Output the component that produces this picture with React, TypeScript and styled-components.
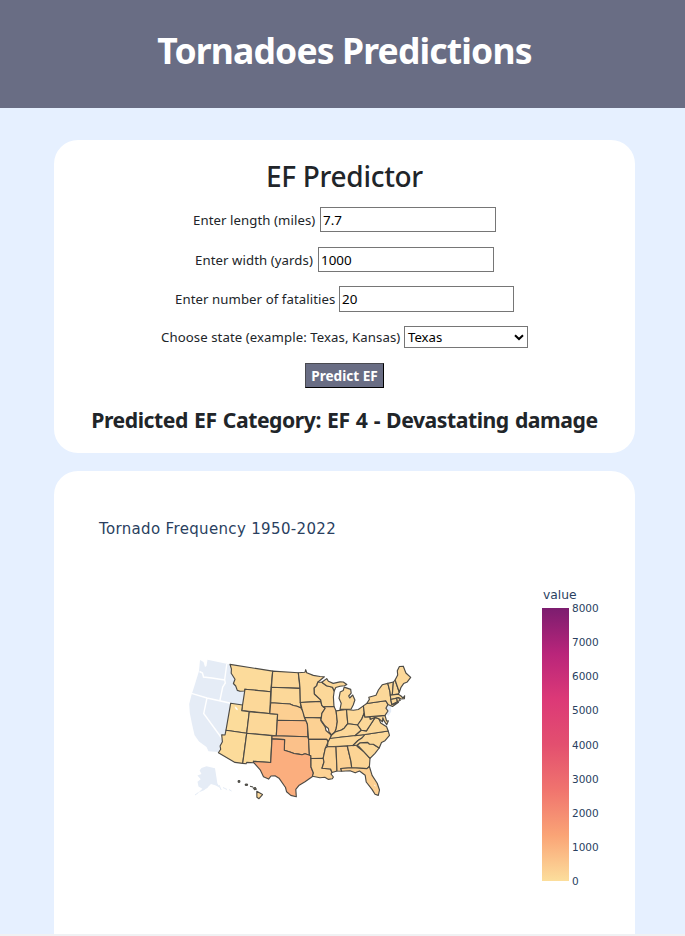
import React from "react";
import styled, { createGlobalStyle } from "styled-components";

const GlobalStyle = createGlobalStyle`
  *, *::before, *::after { box-sizing: border-box; }
  html, body { margin: 0; padding: 0; }
  body {
    background: #e6f0ff;
    color: #212529;
    font-family: "Noto Sans", "Open Sans", sans-serif;
    overflow: hidden;
  }
`;

const Page = styled.div`
  height: 936px;
  display: flex;
  flex-direction: column;
  overflow: hidden;
`;

const Header = styled.header`
  flex: none;
  height: 108px;
  padding: 26px 0 0 4px;
  background: #696d84;
  text-align: center;
`;

const Title = styled.h1`
  margin: 0;
  color: #fff;
  font-size: 35.5px;
  line-height: 48px;
  font-weight: 700;
  letter-spacing: -0.85px;
  white-space: nowrap;
`;

const Main = styled.main`
  flex: 1;
  min-height: 0;
  display: flex;
  flex-direction: column;
  gap: 18px;
  padding: 32px 50px 0 54px;
`;

const PredictorCard = styled.section`
  flex: none;
  height: 313px;
  padding-top: 17px;
  border-radius: 24px;
  background: #fff;
  display: flex;
  flex-direction: column;
  align-items: center;
`;

const CardTitle = styled.h2`
  margin: 0 0 12px;
  font-size: 28px;
  line-height: 38px;
  font-weight: 500;
  letter-spacing: -0.3px;
`;

const Field = styled.div<{ $height: number; $after: number }>`
  display: flex;
  align-items: center;
  gap: 4px;
  height: ${(p) => p.$height}px;
  margin-bottom: ${(p) => p.$after}px;
`;

const Label = styled.label<{ $width: number }>`
  width: ${(p) => p.$width}px;
  font-size: 13.2px;
  line-height: 20px;
  letter-spacing: 0.08px;
  white-space: nowrap;
`;

const TextInput = styled.input<{ $width: number }>`
  width: ${(p) => p.$width}px;
  height: 100%;
  padding: 1px 2px;
  border: 1px solid #767676;
  border-radius: 0;
  background: #fff;
  color: #000;
  font: 13.4px "Noto Sans", sans-serif;
  outline: none;
`;

const SelectBox = styled.div`
  width: 124px;
  height: 22px;
  padding: 0 3px;
  border: 1px solid #767676;
  background: #fff;
  color: #000;
  display: flex;
  align-items: center;
  justify-content: space-between;
  font-size: 13.2px;
`;

const PredictButton = styled.button`
  width: 79px;
  height: 25px;
  margin: 0 0 17px;
  padding: 0;
  border: 1px solid;
  border-color: #4a4a50 #000 #000 #4a4a50;
  background: #696d84;
  color: #fff;
  font: 700 13.6px "Noto Sans", sans-serif;
  letter-spacing: 0;
  white-space: nowrap;
`;

const Result = styled.h4`
  margin: 0;
  font-size: 21.2px;
  line-height: 30px;
  font-weight: 700;
  letter-spacing: -0.46px;
  word-spacing: 1.1px;
  white-space: nowrap;
`;

const ChartCard = styled.section`
  flex: 1;
  min-height: 0;
  padding: 48px 20px 0 45px;
  border-radius: 24px 24px 0 0;
  background: #fff;
  color: #2a3f5f;
  font-family: "DejaVu Sans", Verdana, sans-serif;
`;

const ChartTitle = styled.div`
  font-size: 15px;
  line-height: 20px;
  height: 69px;
  letter-spacing: 0.34px;
  white-space: nowrap;
`;

const ChartBody = styled.div`
  display: flex;
  align-items: flex-start;
`;

const MapDrawing = styled.svg`
  flex: none;
  width: 240px;
  height: 155px;
  margin: 62px 122px 0 81px;
`;

const Legend = styled.div`
  flex: none;
  width: 80px;
`;

const LegendTitle = styled.div`
  height: 20px;
  padding-left: 1px;
  font-size: 12.3px;
  line-height: 15px;
`;

const Scale = styled.div`
  display: flex;
  gap: 3px;
`;

const Ramp = styled.div`
  width: 27px;
  height: 273px;
  background: linear-gradient(
    to top,
    #fcde9c,
    #faa476,
    #f0746e,
    #e34f6f,
    #dc3977,
    #b9257a,
    #7c1d6f
  );
`;

const Ticks = styled.div`
  height: 287px;
  margin-top: -7px;
  display: flex;
  flex-direction: column;
  justify-content: space-between;
  font-size: 10.5px;
  line-height: 14px;
`;

const Footer = styled.footer`
  flex: none;
  height: 2px;
  background: #f0f1f3;
`;

const BASE = "#fcd899";

const states: { id: string; d: string; fill?: string }[] = [
  { id: "MT", fill: "#fcdb9b", d: "230,664.4 272.7,671.1 270.7,691.7 245,689.2 244.4,691 240,691.3 237.3,690.4 235.7,686 233.4,683.5 235,679.2 231.2,673.3 231.4,669" },
  { id: "WY", d: "245,689.2 270.7,691.7 269.8,713.6 241.7,710.6" },
  { id: "UT", fill: "#fcdc9b", d: "230.7,703.2 242.5,705 241.7,710.6 249.3,711.8 246.7,733.3 226,730.2" },
  { id: "CO", d: "249.3,711.8 277.6,714.3 276.3,735.8 246.7,733.3" },
  { id: "AZ", fill: "#fcdb9a", d: "226,730.2 246.7,733.3 242.7,763.4 235,762.4 218.4,752.8 220.7,749.3 220.1,746 222.4,741.7 221.7,734.8 225,735" },
  { id: "NM", fill: "#fcdb9a", d: "246.7,733.3 272,735.8 270.7,762.5 253.4,761.3 254,762.8 246.7,762.4 246,763.8 242.7,763.4" },
  { id: "ND", d: "272.7,671.1 298.3,672.7 300,688.4 271.4,687.3" },
  { id: "SD", d: "271.4,687.3 300,688.4 300.4,702.8 301,708 297,706.2 293.3,705.5 290,704 270.7,702.7" },
  { id: "NE", fill: "#fccf92", d: "270.7,702.7 290,704 293.3,705.5 297,706.2 301,708 303.4,712 304.5,717.5 306,720.7 277.3,720.3 277.6,714.3 269.8,713.6" },
  { id: "KS", fill: "#fbbc86", d: "277.3,720.3 306,720.7 307.4,724 307.8,736.8 276.3,735.8" },
  { id: "OK", fill: "#fbc18a", d: "272,735.8 307.8,736.8 308.6,739.4 309.4,755.2 305,753.8 302,754.8 298.3,754.1 294,753.5 290,752 284.3,750.2 284.6,739.6 272,738.9" },
  { id: "TX", fill: "#fbae7e", d: "272,738.9 284.6,739.6 284.3,750.2 290,752 294,753.5 298.3,754.1 302,754.8 305,753.8 310.8,755.5 311,767 313.4,773 312.5,776.6 305,781.7 299.2,785.2 295.8,789.4 296.3,796.8 290.8,795.4 286.6,791.8 285.5,787.5 279,778.2 275,775.8 271,776 268.6,779.1 263.5,776.8 260.2,769.8 254,762.8 253.4,761.3 270.7,762.5" },
  { id: "MN", d: "298.3,672.7 305,672.2 305.7,669.7 306.7,672.8 313.3,675.4 320,676.5 324.4,676.7 317.7,682.2 316.8,685.6 314.2,688 314.4,694 320.7,699.9 320.8,701.4 300.3,702.5 300,688.4 299.4,681" },
  { id: "IA", fill: "#fcd294", d: "300.3,702.5 320.8,701.4 321.7,705.2 325.2,708.3 321.9,713.4 321.2,717.9 304.5,717.5 302,709" },
  { id: "MO", fill: "#fcd193", d: "304.5,717.5 320.7,717.9 321,721 325.2,727 326,730.5 331.2,735 330,739.3 327.8,741.9 326.7,739.3 308.6,739.4 307.4,724 306,720.7" },
  { id: "AR", fill: "#fcd294", d: "308.6,739.4 326.7,739.3 328.1,742 325.4,748 323.2,758.2 311,758.5 310.8,755.5 309.4,755.2" },
  { id: "LA", fill: "#fcd294", d: "311,758.5 323.2,758.2 324,762 322,768.2 330.6,769 332,772.5 331,774 333.4,777 332.3,778.7 328.5,779.4 324.8,777.3 320,777.8 312.5,776.2 313.4,773 311,767" },
  { id: "WI", d: "317.7,682.2 321.8,682.3 326.5,685.7 332.5,687.3 334.2,691 333.4,697 334,706.6 323.3,706.8 321.7,705.2 320.7,699.9 314.4,694 314.2,688 316.8,685.6" },
  { id: "UP", d: "321.8,682.3 326.7,678.6 328.4,681.3 333.2,683.4 340,681.9 343.3,682 346.8,684.5 344.5,685.7 340,686.2 335.8,687.5 334.2,691 332.5,687.3 326.5,685.7" },
  { id: "MI", d: "344.2,687.1 350.7,689.4 351.2,693.2 348.7,696 349.7,698 352.7,695 354.9,700 353.2,705 351,709.3 340,709.4 341.2,703.3 339,698.3 340.2,692 343.2,690.6" },
  { id: "IL", fill: "#fcd093", d: "323.3,706.8 334,706.6 336.1,710.9 337.3,721.7 336.2,728.4 334.8,732 331.7,735 329,732 328.4,728.5 325,725.8 321,720.2 321.9,713.4 325.2,708.3" },
  { id: "IN", fill: "#fcd495", d: "336.1,710.9 346.5,709.5 347.8,723.7 344.2,728.2 341.5,730 335.2,732 336.2,728.4 337.3,721.7" },
  { id: "OH", d: "346.5,709.5 353.4,710.2 358.3,709.5 363.4,705.9 364.2,713 361.8,719 357.6,725 352,724.2 347.8,723.7" },
  { id: "KY", d: "329.9,738.5 331.7,735 335.2,732 341.5,730 344.2,728.2 347.8,723.7 352,724.2 357.6,725 361.3,730.2 355,735.7 340,737.2 338.5,738" },
  { id: "TN", d: "329.9,738.5 340,737.2 365,734.5 362,738 358,740.5 352.8,745.7 327.4,746.8 328,742" },
  { id: "MS", fill: "#fcd294", d: "327.4,746.8 336,746.7 337,771 332,772.5 330.6,769 322,768.2 324,762 323.2,758.2 325.4,748" },
  { id: "AL", fill: "#fcd193", d: "336,746.7 347.3,746 351,761.6 351.7,767.8 340.8,768.5 341.6,771.2 337,771" },
  { id: "GA", fill: "#fcd495", d: "347.3,746 357.3,745 357,746.2 363.3,751.2 370,758.4 369.4,766.5 367,768.6 351.7,767.8 351,761.6" },
  { id: "FL", fill: "#fccf91", d: "340.8,768.5 351.7,767.8 367,768.6 369.4,766.5 372.1,775.4 377.2,783.2 379.5,790 378.3,795.4 375,794.2 372,789.4 366.2,782 365.2,775.3 359.5,771 355.2,772.8 350,770.7 341.6,771.2" },
  { id: "SC", d: "357.3,745 360,742.8 367.7,742.4 369.4,744 373.3,744.2 379.2,748 375,753.3 370,758.4 363.3,751.2" },
  { id: "NC", d: "365,734.5 388.2,731 389.5,735.3 385,740.7 381.5,742.5 379.2,748 373.3,744.2 369.4,744 367.7,742.4 360,742.8 357.3,745 352.8,745.7 358,740.5 362,738" },
  { id: "VA", d: "355,735.7 361.3,730.2 366.4,730.9 370.1,725.3 375.2,717.4 378.8,718.8 380.7,722.9 386.6,726.8 388.2,731 365,734.5" },
  { id: "WV", d: "357.6,725 361.8,719 364.2,713 364.8,717 370,716.6 370.3,719.2 375.2,717.4 370.1,725.3 366.4,730.9 361.3,730.2" },
  { id: "MD", d: "370,716.6 385,715.4 386.6,721 388.4,720.8 386.7,724.8 383.8,720.4 382.8,717.8 382.5,721.8 378.8,718.8 375.2,717.4 370.3,719.2" },
  { id: "PA", d: "363.4,705.9 366.7,703.5 385.7,700.7 388,704.4 385.9,708.2 388,711 385,715.4 364.8,717" },
  { id: "NY", d: "366.7,703.5 369.4,699.4 368.8,697.3 376,695.2 378.4,690 382.2,684.8 387.8,683.4 390,691.8 390.8,699.5 391.8,704.6 398.5,702.4 392.5,706.5 388,704.4 385.7,700.7" },
  { id: "VT", d: "387.8,683.4 393.4,682 392.3,694.7 390.3,695.2 390,691.8" },
  { id: "NH", d: "393.4,682 395.1,680 399.3,692.3 398.3,694.1 392.3,694.7" },
  { id: "MA", d: "390.3,695.2 398.3,694.1 401,696 403,698 404.6,695.8 404.4,698.8 401,699 398.5,697.6 390.8,699.5" },
  { id: "CT", d: "390.8,699.5 396.7,698.3 397.4,701.7 391.8,704.6" },
  { id: "RI", d: "396.7,698.3 398.5,697.6 400.3,700.3 397.4,701.7" },
  { id: "ME", d: "395.1,680 397.7,675 397.3,670.8 399.4,666.5 403.3,666.2 405.9,673 410.7,677.4 407.3,681.9 403.6,683.6 401,687.3 399.3,692.3" },
  { id: "HI", d: "256.8,791.2 262.5,794.6 259,798.7 256.9,797.3" },
];

function TornadoMap() {
  return (
    <MapDrawing viewBox="180 650 240 155" role="img" aria-label="Tornado frequency by state">
      <g fill="#e5ecf6">
        <polygon points="200,660 203.5,662 205,667 206.5,666 207.5,659.7 230,664.4 231.2,673.3 235,679.2 233.4,683.5 237.3,690.4 245,690 242.5,706 230.7,703.2 226,730.2 225,735 221.7,735 222.4,741.7 218.4,752 208.5,751.3 206.5,747 199,741.5 194.5,735 192,724 189.8,713 189.2,704 191.5,695 195,684 199,671" />
        <polygon points="201.5,768 206.5,766.3 215,768.2 217.4,783.5 220.3,788 215.8,785.5 211,784 207.5,787.5 204,790.3 198.5,792.5 202.4,788.7 198.5,786.5 197.5,781.7 200.7,779.2 197.4,775.5 201.5,774 199.6,770.6" />
        <polygon points="388,704.4 391,706.2 391.2,711.5 388.5,716 386,713.5 388,711 385.9,708.2" />
      </g>
      <path
        d="M198.5,792.5L195,795M208,786.5L206.3,788M219,785l2.2,5M223,787.5l4,2M229,789.5l2.5,1.5"
        stroke="#e5ecf6"
        strokeWidth="1"
        fill="none"
      />
      <path
        d="M199.5,671.5L202.5,673 203.5,677 212,678 224.7,680M226.8,664L224.7,679.5 225.3,683 222.7,687 219.8,701M191.5,693.3L207,698 230.7,703.2M207,698L203.7,713.5 222.3,739"
        stroke="#fff"
        strokeWidth="1.4"
        fill="none"
      />
      <g stroke="#4c4a45" strokeWidth="1.15" strokeLinejoin="round">
        {states.map((s) => (
          <polygon key={s.id} points={s.d} fill={s.fill ?? BASE} />
        ))}
        <g fill="#777363">
          <circle cx="239" cy="781.5" r="0.9" />
          <ellipse cx="246.4" cy="784.7" rx="1.2" ry="0.7" />
          <path d="M250,786.3l3,.7M253.3,788l2,-.5 1,1.8 -1.7,.3z" />
        </g>
      </g>
      <path d="M235,706.8l1.8,1.2 .8,1.8 -1.6,-.6z" fill="#fff" stroke="#fff" strokeWidth=".5" />
      <path d="M374.3,785.2l1.3,.8" stroke="#fff" strokeWidth="1" />
    </MapDrawing>
  );
}

const fields = [
  { label: "Enter length (miles)", value: "7.7", labelWidth: 123, inputWidth: 176, height: 25, after: 15 },
  { label: "Enter width (yards)", value: "1000", labelWidth: 119, inputWidth: 176, height: 25, after: 14 },
  { label: "Enter number of fatalities", value: "20", labelWidth: 160, inputWidth: 175, height: 26, after: 14 },
];

const ticks = [8000, 7000, 6000, 5000, 4000, 3000, 2000, 1000, 0];

export default function App() {
  return (
    <Page>
      <GlobalStyle />
      <Header>
        <Title>Tornadoes Predictions</Title>
      </Header>
      <Main>
        <PredictorCard>
          <CardTitle>EF Predictor</CardTitle>
          {fields.map((f) => (
            <Field key={f.label} $height={f.height} $after={f.after}>
              <Label $width={f.labelWidth}>{f.label}</Label>
              <TextInput $width={f.inputWidth} defaultValue={f.value} aria-label={f.label} />
            </Field>
          ))}
          <Field $height={22} $after={15}>
            <Label $width={239}>Choose state (example: Texas, Kansas)</Label>
            <SelectBox>
              Texas
              <svg width="10" height="7" viewBox="0 0 10 7" fill="none">
                <path d="M1 1.2L5 5L9 1.2" stroke="#000" strokeWidth="2" />
              </svg>
            </SelectBox>
          </Field>
          <PredictButton>Predict EF</PredictButton>
          <Result>Predicted EF Category: EF 4 - Devastating damage</Result>
        </PredictorCard>
        <ChartCard>
          <ChartTitle>Tornado Frequency 1950-2022</ChartTitle>
          <ChartBody>
            <TornadoMap />
            <Legend>
              <LegendTitle>value</LegendTitle>
              <Scale>
                <Ramp />
                <Ticks>
                  {ticks.map((t) => (
                    <span key={t}>{t}</span>
                  ))}
                </Ticks>
              </Scale>
            </Legend>
          </ChartBody>
        </ChartCard>
      </Main>
      <Footer />
    </Page>
  );
}
